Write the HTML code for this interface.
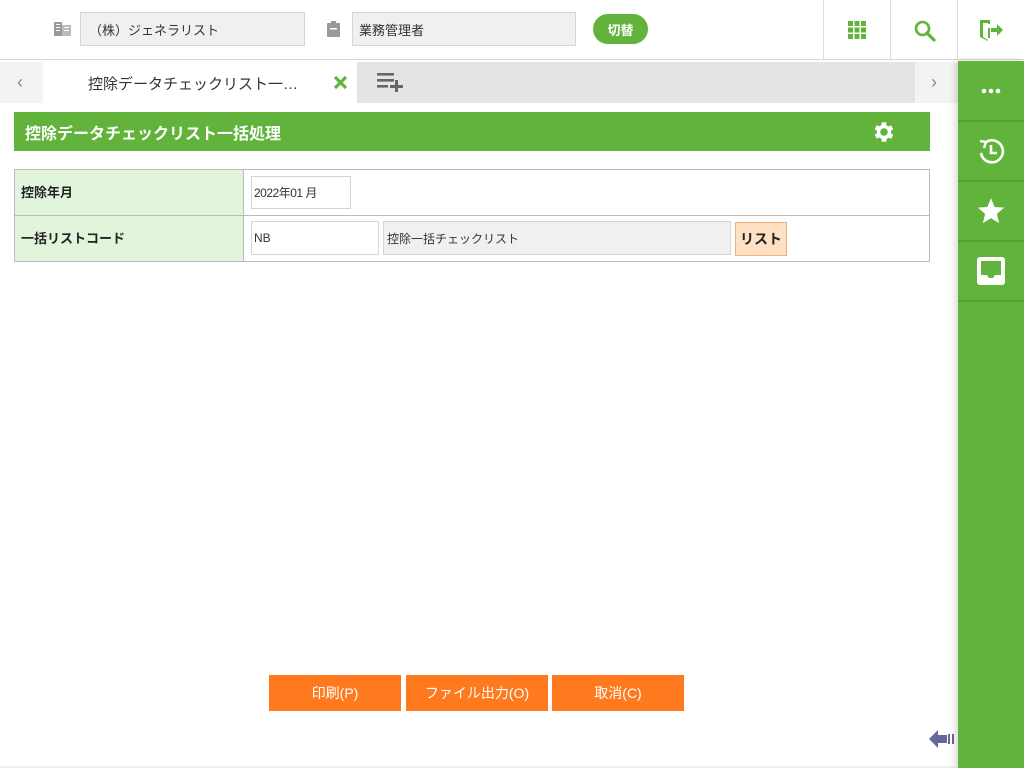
<!DOCTYPE html>
<html><head><meta charset="utf-8"><style>
*{margin:0;padding:0;box-sizing:border-box}
body{width:1024px;height:768px;position:relative;overflow:hidden;background:#fff;font-family:"Liberation Sans","Noto Sans CJK JP",sans-serif;font-size:13px;color:#222}
.a{position:absolute}
.inp{position:absolute;border:1px solid #d4d4d4;background:#f0f0f0;padding-left:8px;display:flex;align-items:center;font-size:13px;color:#333}
.btn{position:absolute;top:675px;height:36px;background:#ff7a1f;color:#fff;display:flex;align-items:center;justify-content:center;font-size:14px}
.sb{position:absolute;left:958px;width:66px;border-bottom:2px solid #55a035;display:flex;align-items:center;justify-content:center}
</style></head><body>
<div class="a" style="left:0;top:0;width:1024px;height:60px;border-bottom:1px solid #d8d8d8"></div>
<svg class="a" style="left:54px;top:21px" width="18" height="16"><rect x="0" y="1" width="8" height="14" fill="#999"/><rect x="8" y="4" width="9" height="11" fill="#bbb"/><g fill="#fff"><rect x="2" y="3" width="4" height="1"/><rect x="2" y="6" width="4" height="1"/><rect x="2" y="9" width="4" height="1"/><rect x="10" y="6" width="5" height="1"/><rect x="10" y="9" width="5" height="1"/></g></svg>
<div class="inp" style="left:80px;top:12px;width:225px;height:34px">（株）ジェネラリスト</div>
<svg class="a" style="left:327px;top:21px" width="13" height="16"><rect x="0" y="2" width="13" height="14" rx="1" fill="#999"/><rect x="4" y="0" width="5" height="4" fill="#999"/><rect x="3" y="7" width="7" height="1.5" fill="#fff"/></svg>
<div class="inp" style="left:352px;top:12px;width:224px;height:34px;padding-left:6px">業務管理者</div>
<div class="a" style="left:593px;top:14px;width:55px;height:30px;border-radius:15px;background:#62b33b;color:#fff;font-size:13px;display:flex;align-items:center;justify-content:center;font-weight:bold">切替</div>
<div class="a" style="left:823px;top:0;width:1px;height:59px;background:#ddd"></div>
<div class="a" style="left:890px;top:0;width:1px;height:59px;background:#ddd"></div>
<div class="a" style="left:957px;top:0;width:1px;height:59px;background:#ddd"></div>
<svg class="a" style="left:848px;top:21px" width="18" height="18" fill="#62b33b"><rect x="0" y="0" width="5" height="5"/><rect x="6.5" y="0" width="5" height="5"/><rect x="13" y="0" width="5" height="5"/><rect x="0" y="6.5" width="5" height="5"/><rect x="6.5" y="6.5" width="5" height="5"/><rect x="13" y="6.5" width="5" height="5"/><rect x="0" y="13" width="5" height="5"/><rect x="6.5" y="13" width="5" height="5"/><rect x="13" y="13" width="5" height="5"/></svg>
<svg class="a" style="left:914px;top:20px" width="22" height="22"><circle cx="8.5" cy="8.5" r="6.5" stroke="#62b33b" stroke-width="2.6" fill="none"/><line x1="13" y1="13" x2="20" y2="20" stroke="#62b33b" stroke-width="3.2" stroke-linecap="round"/></svg>
<svg class="a" style="left:980px;top:19px" width="24" height="22" fill="#62b33b"><path d="M0 1h10v4H8V4H3v14l5 3V9h2v10H8v3L0 18z"/><path d="M11 9h6V5l6 6-6 6v-4h-6z"/></svg>
<div class="a" style="left:0;top:62px;width:958px;height:41px;background:#f3f3f3"></div>
<div class="a" style="left:43px;top:62px;width:314px;height:41px;background:#fff"></div>
<div class="a" style="left:357px;top:62px;width:558px;height:41px;background:#e4e4e4"></div>
<div class="a" style="left:17px;top:72px;color:#888;font-size:18px">‹</div>
<div class="a" style="left:931px;top:72px;color:#888;font-size:18px">›</div>
<div class="a" style="left:88px;top:73px;font-size:15px;color:#333">控除データチェックリスト一…</div>
<svg class="a" style="left:333px;top:75px" width="15" height="15"><path d="M2 2L13 13M13 2L2 13" stroke="#62b33b" stroke-width="3.2"/></svg>
<svg class="a" style="left:377px;top:73px" width="27" height="19" fill="#666"><rect x="0" y="0" width="17" height="2.6"/><rect x="0" y="6" width="17" height="2.6"/><rect x="0" y="12" width="11" height="2.6"/><rect x="13" y="12" width="13" height="3"/><rect x="18" y="7" width="3" height="12"/></svg>
<div class="a" style="left:14px;top:112px;width:916px;height:39px;background:#62b33b;color:#fff;font-size:16px;font-weight:bold;padding:8px 0 0 11px">控除データチェックリスト一括処理</div>
<svg class="a" style="left:871px;top:119px" width="26" height="26" viewBox="0 0 24 24" fill="#fff"><path d="M19.4 13a7.5 7.5 0 0 0 0-2l2.1-1.6-2-3.5-2.5 1a7 7 0 0 0-1.7-1L15 3h-4l-.4 2.7a7 7 0 0 0-1.7 1l-2.5-1-2 3.5L6.5 11a7.5 7.5 0 0 0 0 2l-2.1 1.6 2 3.5 2.5-1a7 7 0 0 0 1.7 1L11 21h4l.4-2.7a7 7 0 0 0 1.7-1l2.5 1 2-3.5zM13 15.5a3.5 3.5 0 1 1 0-7 3.5 3.5 0 0 1 0 7z" transform="translate(-1 0)"/></svg>
<div class="a" style="left:14px;top:169px;width:916px;height:93px;border:1px solid #bbb"></div>
<div class="a" style="left:15px;top:170px;width:228px;height:91px;background:#e2f4dc"></div>
<div class="a" style="left:243px;top:170px;width:1px;height:91px;background:#bbb"></div>
<div class="a" style="left:15px;top:215px;width:914px;height:1px;background:#bbb"></div>
<div class="a" style="left:21px;top:182px;font-weight:bold;font-size:13px">控除年月</div>
<div class="a" style="left:21px;top:228px;font-weight:bold;font-size:13px">一括リストコード</div>
<div class="inp" style="left:251px;top:176px;width:100px;height:33px;background:#fff;padding-left:2px;font-size:12px;letter-spacing:-.5px">2022年01 月</div>
<div class="inp" style="left:251px;top:221px;width:128px;height:34px;background:#fff;padding-left:2px;font-size:12px">NB</div>
<div class="inp" style="left:383px;top:221px;width:348px;height:34px;padding-left:3px;font-size:12px">控除一括チェックリスト</div>
<div class="a" style="left:735px;top:222px;width:52px;height:34px;background:#ffe0c4;border:1px solid #f2b07a;font-weight:bold;font-size:14px;display:flex;align-items:center;justify-content:center">リスト</div>
<div class="btn" style="left:269px;width:132px">印刷(P)</div>
<div class="btn" style="left:406px;width:142px">ファイル出力(O)</div>
<div class="btn" style="left:552px;width:132px">取消(C)</div>
<svg class="a" style="left:929px;top:728px" width="28" height="22"><path d="M0 11L9 2v5h9v8H9v5z" fill="#66679a"/><rect x="19" y="6" width="2" height="10" fill="#66679a"/><rect x="23" y="6" width="2" height="10" fill="#66679a"/></svg>
<div class="a" style="left:0;top:766px;width:958px;height:2px;background:#eee"></div>
<div class="a" style="left:958px;top:61px;width:66px;height:707px;background:#62b33b;box-shadow:-3px 0 6px rgba(0,0,0,.15)"></div>
<div class="sb" style="top:61px;height:61px"><svg width="20" height="6" fill="#fff"><circle cx="3" cy="3" r="2.3"/><circle cx="10" cy="3" r="2.3"/><circle cx="17" cy="3" r="2.3"/></svg></div>
<div class="sb" style="top:122px;height:60px"><svg width="32" height="32" viewBox="0 0 32 32" fill="none" stroke="#fff" stroke-width="2.6"><path d="M6 18a11 11 0 1 0 5-11"/><path d="M5 6l6 1-2 6" stroke-width="2.4"/><path d="M16 10v8h6"/></svg></div>
<div class="sb" style="top:182px;height:60px"><svg width="28" height="27" viewBox="0 0 24 23" fill="#fff"><path d="M12 0l3.1 7.6 8.2.6-6.3 5.3 2 8L12 17.2 5 21.5l2-8L.7 8.2l8.2-.6z"/></svg></div>
<div class="sb" style="top:242px;height:60px"><svg width="30" height="30" viewBox="0 0 30 30"><rect x="1" y="1" width="28" height="28" rx="3" fill="#fff"/><path d="M5 5h20v14h-6l-2 3h-4l-2-3H5z" fill="#62b33b"/></svg></div>
</body></html>
